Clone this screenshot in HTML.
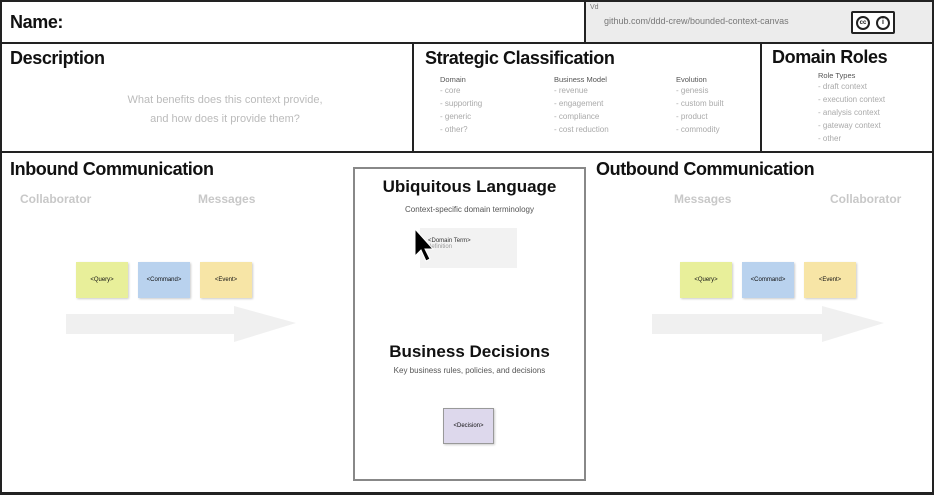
<!DOCTYPE html>
<html><head><meta charset="utf-8"><style>
*{margin:0;padding:0;box-sizing:border-box}
body{width:934px;height:497px;background:#fff;position:relative;overflow:hidden;font-family:"Liberation Sans",sans-serif;color:#111}
.a{position:absolute}
.h{font-weight:bold;font-size:18px;letter-spacing:-0.4px}
.g{color:#c8c8c8}
.sm{font-size:8px;color:#aaa;line-height:13px}
.st{font-size:7.5px;color:#555}
.note{position:absolute;width:52px;height:36px;font-size:6px;display:flex;align-items:center;justify-content:center;box-shadow:1px 1px 2px #ccc}
</style></head><body>
<div class="a" style="left:0;top:0;width:934px;height:495px;border:2px solid #222;border-bottom:3px solid #222"></div>
<div class="a" style="left:585px;top:2px;width:347px;height:41px;background:#ececec"></div>
<div class="a" style="left:0;top:42px;width:934px;height:2px;background:#222"></div>
<div class="a" style="left:584px;top:0;width:2px;height:43px;background:#222"></div>
<div class="a" style="left:0;top:151px;width:934px;height:2px;background:#222"></div>
<div class="a" style="left:412px;top:43px;width:2px;height:109px;background:#222"></div>
<div class="a" style="left:760px;top:43px;width:2px;height:109px;background:#222"></div>

<div class="a h" style="left:10px;top:12px">Name:</div>
<div class="a" style="left:590px;top:4px;font-size:7px;color:#777">Vd</div>
<div class="a" style="left:604px;top:16px;font-size:9px;color:#777">github.com/ddd-crew/bounded-context-canvas</div>
<div class="a" style="left:851px;top:11px;width:44px;height:23px;background:#fff;border:2px solid #222;border-radius:2px;display:flex;align-items:center;justify-content:space-around;font-size:8px;font-weight:bold"><span style="border:2px solid #222;border-radius:50%;width:14px;height:14px;display:inline-block;text-align:center;line-height:10px;font-size:6px">cc</span><span style="border:2px solid #222;border-radius:50%;width:14px;height:14px;display:inline-block;text-align:center;line-height:10px;font-size:7px">i</span></div>

<div class="a h" style="left:10px;top:48px">Description</div>
<div class="a" style="left:60px;top:91px;width:330px;text-align:center;font-size:11px;color:#bbb;line-height:19px">What benefits does this context provide,<br>and how does it provide them?</div>

<div class="a h" style="left:425px;top:48px">Strategic Classification</div>
<div class="a st" style="left:440px;top:75px">Domain<div class="sm">- core<br>- supporting<br>- generic<br>- other?</div></div>
<div class="a st" style="left:554px;top:75px">Business Model<div class="sm">- revenue<br>- engagement<br>- compliance<br>- cost reduction</div></div>
<div class="a st" style="left:676px;top:75px">Evolution<div class="sm">- genesis<br>- custom built<br>- product<br>- commodity</div></div>

<div class="a h" style="left:772px;top:47px">Domain Roles</div>
<div class="a st" style="left:818px;top:71px">Role Types<div class="sm">- draft context<br>- execution context<br>- analysis context<br>- gateway context<br>- other</div></div>

<div class="a h" style="left:10px;top:159px">Inbound Communication</div>
<div class="a g" style="left:20px;top:192px;font-size:12px;font-weight:bold">Collaborator</div>
<div class="a g" style="left:198px;top:192px;font-size:12px;font-weight:bold">Messages</div>
<div class="note" style="left:76px;top:262px;background:#e8ef9a">&lt;Query&gt;</div>
<div class="note" style="left:138px;top:262px;background:#b9d2ee">&lt;Command&gt;</div>
<div class="note" style="left:200px;top:262px;background:#f7e5a6">&lt;Event&gt;</div>
<svg class="a" style="left:66px;top:305px" width="232" height="40"><polygon points="0,9 168,9 168,1 230,18 168,37 168,29 0,29" fill="#f0f0f0"/></svg>

<div class="a" style="left:353px;top:167px;width:233px;height:314px;border:2px solid #888"></div>
<div class="a" style="left:353px;top:177px;width:233px;text-align:center;font-weight:bold;font-size:17px">Ubiquitous Language</div>
<div class="a" style="left:353px;top:205px;width:233px;text-align:center;font-size:8px;color:#555">Context-specific domain terminology</div>
<div class="a" style="left:420px;top:228px;width:97px;height:40px;background:#f2f2f2;font-size:6px;padding:10px 8px;color:#333">&lt;Domain Term&gt;<br><span style="color:#999">definition</span></div>
<svg class="a" style="left:413px;top:228px" width="22" height="36"><polygon points="2,1 2,28 8,22 13,33 17,31 12,21 20,21" fill="#000" stroke="#fff" stroke-width="1"/></svg>
<div class="a" style="left:353px;top:342px;width:233px;text-align:center;font-weight:bold;font-size:17px">Business Decisions</div>
<div class="a" style="left:353px;top:366px;width:233px;text-align:center;font-size:8px;color:#555">Key business rules, policies, and decisions</div>
<div class="note" style="left:443px;top:408px;width:51px;height:36px;background:#ddd8ec;border:1px solid #999">&lt;Decision&gt;</div>

<div class="a h" style="left:596px;top:159px">Outbound Communication</div>
<div class="a g" style="left:674px;top:192px;font-size:12px;font-weight:bold">Messages</div>
<div class="a g" style="left:830px;top:192px;font-size:12px;font-weight:bold">Collaborator</div>
<div class="note" style="left:680px;top:262px;background:#e8ef9a">&lt;Query&gt;</div>
<div class="note" style="left:742px;top:262px;background:#b9d2ee">&lt;Command&gt;</div>
<div class="note" style="left:804px;top:262px;background:#f7e5a6">&lt;Event&gt;</div>
<svg class="a" style="left:652px;top:305px" width="234" height="40"><polygon points="0,9 170,9 170,1 232,18 170,37 170,29 0,29" fill="#f0f0f0"/></svg>
</body></html>
